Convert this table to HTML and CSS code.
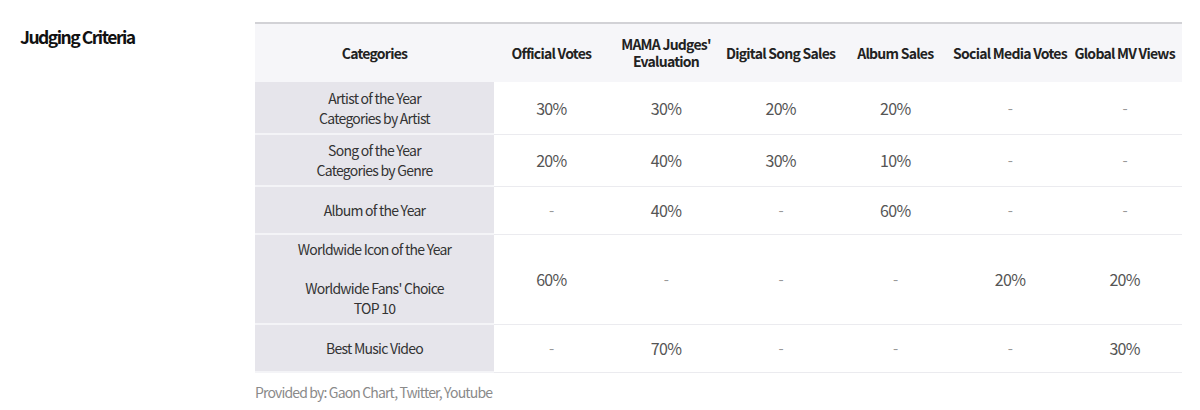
FILE: index.html
```html
<!DOCTYPE html>
<html lang="en">
<head>
<meta charset="utf-8">
<title>Judging Criteria</title>
<link rel="stylesheet" href="styles.css">
</head>
<body>
<div class="page">
  <h2 class="title">Judging Criteria</h2>
  <div class="content">
    <table class="criteria">
      <colgroup>
        <col class="col-cat">
        <col class="col-val"><col class="col-val"><col class="col-val">
        <col class="col-val"><col class="col-val"><col class="col-val">
      </colgroup>
      <thead>
        <tr class="head-row">
          <th>Categories</th>
          <th>Official Votes</th>
          <th>MAMA Judges'<br>Evaluation</th>
          <th>Digital Song Sales</th>
          <th>Album Sales</th>
          <th>Social Media Votes</th>
          <th>Global MV Views</th>
        </tr>
      </thead>
      <tbody>
        <tr class="row-2l">
          <td class="cat">Artist of the Year<br>Categories by Artist</td>
          <td>30%</td><td>30%</td><td>20%</td><td>20%</td><td class="dash">-</td><td class="dash">-</td>
        </tr>
        <tr class="row-2l">
          <td class="cat">Song of the Year<br>Categories by Genre</td>
          <td>20%</td><td>40%</td><td>30%</td><td>10%</td><td class="dash">-</td><td class="dash">-</td>
        </tr>
        <tr class="row-1l">
          <td class="cat">Album of the Year</td>
          <td class="dash">-</td><td>40%</td><td class="dash">-</td><td>60%</td><td class="dash">-</td><td class="dash">-</td>
        </tr>
        <tr class="row-4l">
          <td class="cat">Worldwide Icon of the Year<br><br>Worldwide Fans' Choice<br>TOP 10</td>
          <td>60%</td><td class="dash">-</td><td class="dash">-</td><td class="dash">-</td><td>20%</td><td>20%</td>
        </tr>
        <tr class="row-1l">
          <td class="cat">Best Music Video</td>
          <td class="dash">-</td><td>70%</td><td class="dash">-</td><td class="dash">-</td><td class="dash">-</td><td>30%</td>
        </tr>
      </tbody>
    </table>
    <p class="source">Provided by: Gaon Chart, Twitter, Youtube</p>
  </div>
</div>
</body>
</html>
```

FILE: styles.css
```css
html, body {
  margin: 0;
  padding: 0;
  background: #ffffff;
}

body {
  font-family: "Noto Sans CJK KR", "Source Sans Pro", "Noto Sans", sans-serif;
  color: #222;
}

.page {
  display: flex;
  align-items: flex-start;
  padding: 22px 0 0 20px;
}

.title {
  width: 235px;
  margin: 0;
  padding-top: 3px;
  font-size: 17.5px;
  font-weight: 700;
  letter-spacing: -1.5px;
  line-height: 24px;
  color: #111;
}

.content {
  width: 927px;
}

.criteria {
  width: 927px;
  border-collapse: collapse;
  table-layout: fixed;
  border-top: 2px solid #d2d2d6;
}

.col-cat {
  width: 239px;
}

.col-val {
  width: 114.67px;
}

.criteria th {
  background: #f6f6f9;
  height: 58px;
  padding: 0;
  font-size: 14px;
  font-weight: 700;
  line-height: 17px;
  color: #222;
  text-align: center;
  vertical-align: middle;
  letter-spacing: -0.75px;
  white-space: nowrap;
}

.criteria td {
  padding: 0 4px;
  font-size: 16px;
  line-height: 20px;
  letter-spacing: -0.7px;
  color: #555;
  text-align: center;
  vertical-align: middle;
  border-bottom: 1px solid #ebebef;
}

.criteria td.cat {
  background: #e6e5eb;
  font-size: 14px;
  line-height: 20px;
  letter-spacing: -0.75px;
  color: #333;
  border-bottom: 2px solid #f4f4f7;
}

.criteria td.dash {
  color: #999;
  font-size: 15px;
}

.row-2l {
  height: 52px;
}

.row-1l {
  height: 48px;
}

.row-4l {
  height: 90px;
}

.row-4l td.cat {
  line-height: 19.5px;
}

.source {
  margin: 9px 0 0;
  font-size: 14px;
  line-height: 20px;
  letter-spacing: -0.85px;
  color: #8a8a8a;
}
```
